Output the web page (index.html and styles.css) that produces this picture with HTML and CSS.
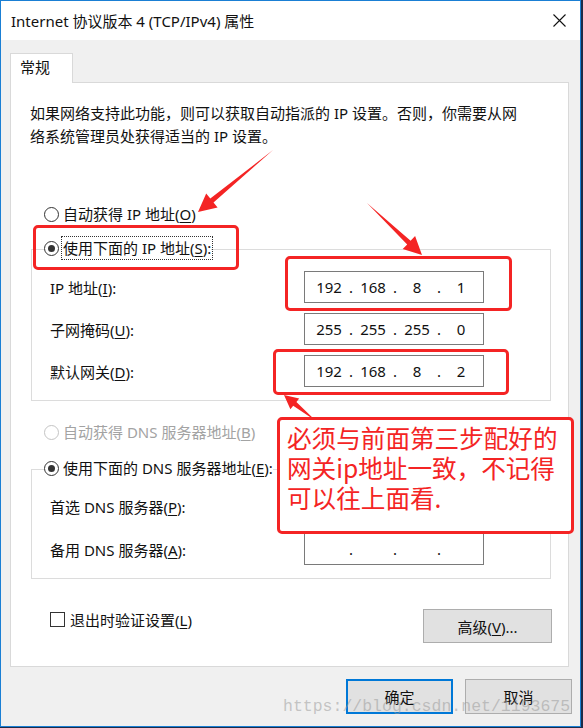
FILE: index.html
```html
<!DOCTYPE html>
<html lang="zh-CN">
<head>
    <meta charset="UTF-8">
    <title>Internet 协议版本 4 (TCP/IPv4) 属性</title>
    <link rel="stylesheet" href="styles.css">
</head>
<body>

<div class="window">
    <div class="titlebar">
        <span class="title">Internet 协议版本 4 (TCP/IPv4) 属性</span>
        <svg class="close" width="13" height="13" viewBox="0 0 13 13">
            <path d="M0.5 0.5 L12.5 12.5 M12.5 0.5 L0.5 12.5" stroke="#111" stroke-width="1.1" fill="none"/>
        </svg>
    </div>

    <div class="tabs">
        <div class="tab">常规</div>
    </div>

    <div class="panel">
        <p class="desc">如果网络支持此功能，则可以获取自动指派的 IP 设置。否则，你需要从网<br>络系统管理员处获得适当的 IP 设置。</p>

        <div class="radio first"><span class="circle"></span><span>自动获得 IP 地址(<u>O</u>)</span></div>

        <fieldset class="group">
            <legend>
                <div class="radio"><span class="circle on"></span><span class="focus">使用下面的 IP 地址(<u>S</u>):</span></div>
            </legend>
            <div class="row">
                <span class="lbl">IP 地址(<u>I</u>):</span>
                <div class="ip"><span class="oct">192</span><span class="sep">.</span><span class="oct">168</span><span class="sep">.</span><span class="oct">8</span><span class="sep">.</span><span class="oct">1</span></div>
            </div>
            <div class="row">
                <span class="lbl">子网掩码(<u>U</u>):</span>
                <div class="ip"><span class="oct">255</span><span class="sep">.</span><span class="oct">255</span><span class="sep">.</span><span class="oct">255</span><span class="sep">.</span><span class="oct">0</span></div>
            </div>
            <div class="row">
                <span class="lbl">默认网关(<u>D</u>):</span>
                <div class="ip"><span class="oct">192</span><span class="sep">.</span><span class="oct">168</span><span class="sep">.</span><span class="oct">8</span><span class="sep">.</span><span class="oct">2</span></div>
            </div>
        </fieldset>

        <div class="radio disabled"><span class="circle"></span><span>自动获得 DNS 服务器地址(<u>B</u>)</span></div>

        <fieldset class="group dns">
            <legend>
                <div class="radio"><span class="circle on"></span><span>使用下面的 DNS 服务器地址(<u>E</u>):</span></div>
            </legend>
            <div class="row">
                <span class="lbl">首选 DNS 服务器(<u>P</u>):</span>
                <div class="ip"><span class="oct"></span><span class="sep">.</span><span class="oct"></span><span class="sep">.</span><span class="oct"></span><span class="sep">.</span><span class="oct"></span></div>
            </div>
            <div class="row">
                <span class="lbl">备用 DNS 服务器(<u>A</u>):</span>
                <div class="ip"><span class="oct"></span><span class="sep">.</span><span class="oct"></span><span class="sep">.</span><span class="oct"></span><span class="sep">.</span><span class="oct"></span></div>
            </div>
        </fieldset>

        <div class="options">
            <div class="check"><span class="box"></span><span>退出时验证设置(<u>L</u>)</span></div>
            <button class="btn adv">高级(<u>V</u>)...</button>
        </div>
    </div>

    <div class="actions">
        <button class="btn primary">确定</button>
        <button class="btn">取消</button>
    </div>

    <!-- annotations drawn over the dialog -->
    <div class="watermark">https://blog.csdn.net/1193675</div>

    <svg class="arrows" width="579" height="725" viewBox="1 1 579 725">
        <polygon fill="#f42424" points="273,150 213.5,202.4 217.6,207.4 198,212 206.2,193.6 210.3,198.6"/>
        <polygon fill="#f42424" points="367,203 407.2,244.4 402.7,249.1 422,255 415.1,236.1 410.6,240.8"/>
        <polygon fill="#f42424" points="316,421 296.4,402.0 299.2,398.5 284,395 290.4,409.3 293.2,405.8"/>
    </svg>

    <div class="mark mark-radio"></div>
    <div class="mark mark-ip"></div>
    <div class="mark mark-gw"></div>

    <div class="note">必须与前面第三步配好的<br>网关ip地址一致，不记得<br>可以往上面看.</div>
</div>

</body>
</html>
```

FILE: styles.css
```css
* {
    box-sizing: border-box;
}

body {
    margin: 0;
    background-color: #1d2b48;
    font-family: "Noto Sans", "Noto Sans CJK SC", sans-serif;
    font-size: 15px;
    color: #111;
}

.window {
    position: relative;
    width: 581px;
    height: 727px;
    border: 1px solid #1a7fd4;
    background-color: #f0f0f0;
}

.titlebar {
    height: 39px;
    background-color: #fff;
    display: flex;
    align-items: center;
    justify-content: space-between;
    padding: 0 14px 0 10px;
}

.close {
    display: block;
}

/* Tab strip */
.tabs {
    display: flex;
    padding: 13px 0 0 9px;
}

.tab {
    position: relative;
    z-index: 1;
    width: 63px;
    height: 30px;
    margin-bottom: -1px;
    padding-left: 9px;
    line-height: 26px;
    background-color: #fff;
    border: 1px solid #d9d9d9;
    border-bottom: none;
}

.panel {
    margin-left: 9px;
    width: 559px;
    height: 585px;
    padding: 19px 16px 0 19px;
    background-color: #fff;
    border: 1px solid #d9d9d9;
}

.desc {
    margin: 0;
    line-height: 23px;
}

u {
    text-decoration-thickness: 1px;
    text-underline-offset: 2px;
}

/* Radio buttons */
.radio {
    display: flex;
    align-items: center;
    gap: 4px;
    height: 22px;
    line-height: 22px;
    white-space: nowrap;
}

.radio.first {
    margin: 55px 0 0 14px;
}

.radio.disabled {
    margin: 20px 0 0 14px;
    color: #a3a3a3;
}

.circle {
    position: relative;
    flex: none;
    width: 15px;
    height: 15px;
    border: 1px solid #333;
    border-radius: 50%;
    background-color: #fff;
}

.disabled .circle {
    border-color: #c4c4c4;
}

.circle.on::after {
    content: "";
    position: absolute;
    left: 3px;
    top: 3px;
    width: 7px;
    height: 7px;
    border-radius: 50%;
    background-color: #333;
}

.focus {
    outline: 1px dotted #333;
    outline-offset: 1px;
    line-height: 20px;
}

/* Group boxes */
.group {
    margin: 12px 0 0 1px;
    padding: 10px 0 13px 0;
    width: 520px;
    min-width: 0;
    border: 1px solid #dcdcdc;
}

.group.dns {
    margin-top: 14px;
    padding-top: 9px;
}

.group legend {
    margin-left: 12px;
    padding: 0 0 2px 0;
}

.row {
    display: flex;
    align-items: center;
    height: 32px;
    padding-left: 18px;
}

.row + .row {
    margin-top: 10px;
}

.dns .row + .row {
    margin-top: 11px;
}

.lbl {
    width: 254px;
}

.ip {
    display: flex;
    align-items: center;
    width: 180px;
    height: 32px;
    padding-left: 3px;
    border: 1px solid #7a7a7a;
    background-color: #fff;
}

.oct {
    width: 42px;
    text-align: center;
}

.sep {
    display: flex;
    justify-content: center;
    width: 2px;
}

/* Bottom of panel */
.options {
    display: flex;
    align-items: flex-start;
    margin-top: 29px;
}

.check {
    display: flex;
    align-items: center;
    gap: 5px;
    height: 22px;
    padding-left: 20px;
}

.box {
    width: 15px;
    height: 15px;
    border: 1px solid #333;
    background-color: #fff;
}

.btn {
    font-family: inherit;
    font-size: 15px;
    color: #111;
    background-color: #e1e1e1;
    border: 1px solid #adadad;
    padding: 0;
}

.adv {
    margin: 1px 0 0 auto;
    width: 129px;
    height: 34px;
}

.actions {
    display: flex;
    justify-content: flex-end;
    gap: 12px;
    padding: 12px 8px 0 0;
}

.actions .btn {
    width: 107px;
    height: 35px;
}

.btn.primary {
    border: 2px solid #0078d7;
}

/* Annotations */
.watermark {
    position: absolute;
    left: 282px;
    top: 696px;
    font-family: "Liberation Mono", monospace;
    font-size: 16.5px;
    line-height: 20px;
    color: rgba(150, 150, 150, 0.5);
    pointer-events: none;
}

.arrows {
    position: absolute;
    left: 0;
    top: 0;
    pointer-events: none;
}

.mark {
    position: absolute;
    border: 3px solid #f42424;
    border-radius: 5px;
}

.mark-radio {
    left: 32px;
    top: 224px;
    width: 206px;
    height: 45px;
}

.mark-ip {
    left: 284px;
    top: 255px;
    width: 227px;
    height: 55px;
}

.mark-gw {
    left: 272px;
    top: 348px;
    width: 236px;
    height: 46px;
}

.note {
    position: absolute;
    left: 276px;
    top: 416px;
    width: 297px;
    height: 117px;
    padding: 2px 0 0 7px;
    background-color: #fff;
    border: 3px solid #f42424;
    border-radius: 5px;
    font-family: "Noto Sans CJK SC", sans-serif;
    font-size: 24.6px;
    line-height: 30px;
    color: #f42424;
    white-space: nowrap;
}
```
